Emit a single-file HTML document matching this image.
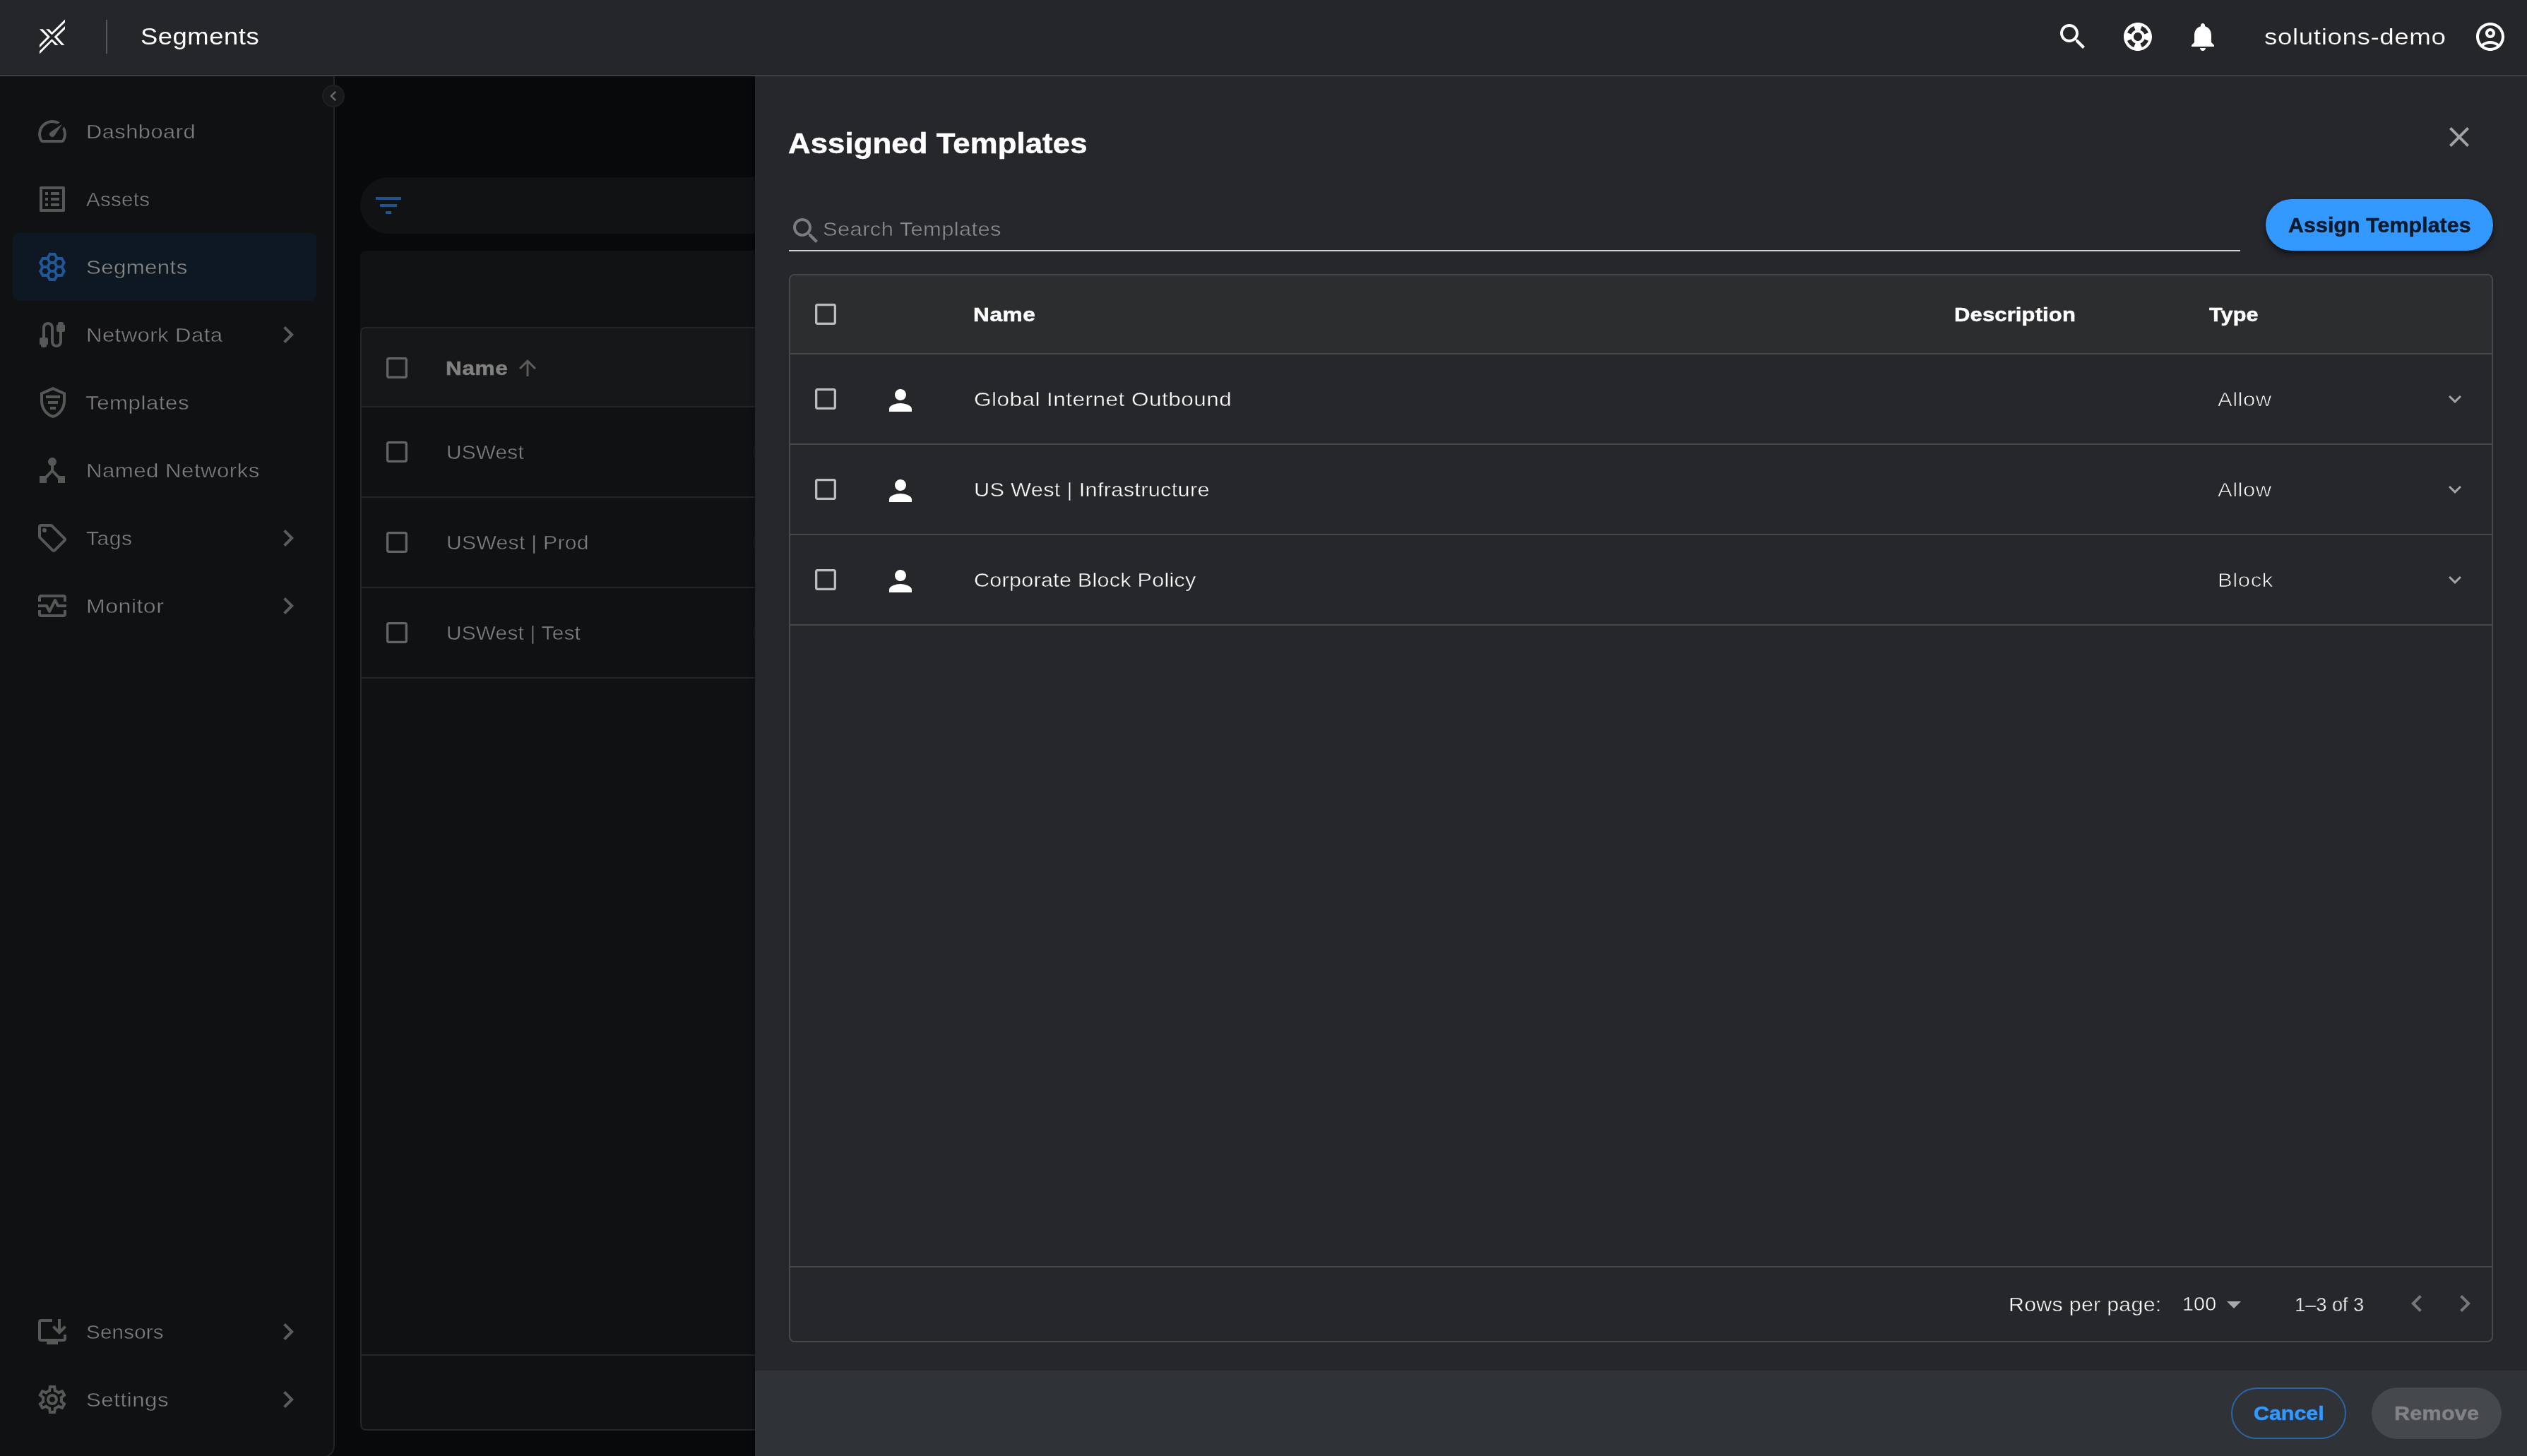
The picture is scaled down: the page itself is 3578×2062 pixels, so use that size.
<!DOCTYPE html>
<html><head><meta charset="utf-8"><title>Segments</title>
<style>
html,body{margin:0;padding:0}
body{width:3578px;height:2062px;background:#08090b;position:relative;overflow:hidden;font-family:"Liberation Sans",sans-serif}
div,span,svg{position:absolute;display:block}
span{white-space:nowrap;transform-origin:0 0;will-change:transform}
</style></head><body>
<div style="left:-2px;top:108px;width:476px;height:1956px;box-sizing:border-box;background:#101113;border:2px solid #232427;border-top:0;border-radius:0 0 16px 0"></div>
<div style="left:18px;top:330px;width:430px;height:96px;background:#0e1822;border-radius:8px;"></div>
<svg viewBox="0 0 24 24" style="left:50px;top:162px;width:48px;height:48px;fill:#565857;"><path d="M20.38 8.57l-1.23 1.85a8 8 0 0 1-.22 7.58H5.07A8 8 0 0 1 15.58 6.85l1.85-1.23A10 10 0 0 0 3.35 19a2 2 0 0 0 1.72 1h13.85a2 2 0 0 0 1.74-1 10 10 0 0 0-.27-10.44zm-9.79 6.84a2 2 0 0 0 2.83 0l5.66-8.49-8.49 5.66a2 2 0 0 0 0 2.83z"/></svg>
<span style="left:122px;top:173px;font-size:28px;line-height:28px;letter-spacing:0.44px;color:#7e7e7e;-webkit-text-stroke:0.45px #101113;transform:scaleX(1.0997)">Dashboard</span>
<svg viewBox="0 0 24 24" style="left:50px;top:258px;width:48px;height:48px;fill:#565857;"><path d="M19 5v14H5V5h14m1.1-2H3.9c-.5 0-.9.4-.9.9v16.2c0 .4.4.9.9.9h16.2c.4 0 .9-.5.9-.9V3.9c0-.5-.5-.9-.9-.9zM11 7h6v2h-6V7zm0 4h6v2h-6v-2zm0 4h6v2h-6zM7 7h2v2H7zm0 4h2v2H7zm0 4h2v2H7z"/></svg>
<span style="left:122px;top:269px;font-size:28px;line-height:28px;letter-spacing:0.25px;color:#7e7e7e;-webkit-text-stroke:0.45px #101113;transform:scaleX(1.054)">Assets</span>
<svg viewBox="0 0 24 24" style="left:50px;top:354px;width:48px;height:48px;fill:#1f5797;"><path d="M21.5 9l-2.25-4h-3.31l-1.69-3h-4.5L8.06 5H4.75L2.5 9l1.69 3-1.69 3 2.25 4h3.31l1.69 3h4.5l1.69-3h3.31l2.25-4-1.69-3 1.69-3zm-2.29 0l-1.12 2h-2.17l-1.12-2 1.12-2h2.17l1.12 2zm-8.3 5l-1.12-2 1.12-2h2.17l1.12 2-1.12 2h-2.17zm2.18-10l1.12 2-1.12 2h-2.17L9.79 6l1.12-2h2.18zM5.92 7h2.17l1.12 2-1.12 2H5.92L4.79 9l1.13-2zM4.79 15l1.12-2h2.17l1.12 2-1.12 2H5.92l-1.13-2zm6.12 5l-1.12-2 1.12-2h2.17l1.12 2-1.12 2h-2.17zm7.17-3h-2.17l-1.12-2 1.12-2h2.17l1.12 2-1.12 2z"/></svg>
<span style="left:122px;top:365px;font-size:28px;line-height:28px;letter-spacing:0.34px;color:#888886;-webkit-text-stroke:0.45px #0e1822;transform:scaleX(1.1155)">Segments</span>
<svg viewBox="0 0 24 24" style="left:50px;top:450px;width:48px;height:48px;fill:#565857;"><path d="M20 5V4c0-.55-.45-1-1-1h-2c-.55 0-1 .45-1 1v1h-1v4c0 .55.45 1 1 1h1v7c0 1.1-.9 2-2 2s-2-.9-2-2V7c0-2.21-1.79-4-4-4S5 4.79 5 7v7H4c-.55 0-1 .45-1 1v4h1v1c0 .55.45 1 1 1h2c.55 0 1-.45 1-1v-1h1v-4c0-.55-.45-1-1-1H7V7c0-1.1.9-2 2-2s2 .9 2 2v10c0 2.21 1.79 4 4 4s4-1.79 4-4v-7h1c.55 0 1-.45 1-1V5h-1z"/></svg>
<span style="left:122px;top:461px;font-size:28px;line-height:28px;letter-spacing:0.37px;color:#7e7e7e;-webkit-text-stroke:0.45px #101113;transform:scaleX(1.1114)">Network Data</span>
<svg viewBox="0 0 24 24" style="left:51px;top:546px;width:48px;height:48px;fill:#565857;"><path d="M12 1L3 5v6c0 5.55 3.84 10.74 9 12 5.16-1.26 9-6.45 9-12V5l-9-4zm7 10c0 4.52-2.98 8.69-7 9.93-4.02-1.24-7-5.41-7-9.93V6.3l7-3.11 7 3.11V11zM7 7h10v2H7zM8.5 11h7v2h-7zM10 15h4v2h-4z"/></svg>
<span style="left:121px;top:557px;font-size:28px;line-height:28px;letter-spacing:0.49px;color:#7e7e7e;-webkit-text-stroke:0.45px #101113;transform:scaleX(1.114)">Templates</span>
<svg viewBox="0 0 24 24" style="left:50px;top:642px;width:48px;height:48px;fill:#565857;"><path d="M17 16l-4-4V8.82C14.16 8.4 15 7.3 15 6c0-1.66-1.34-3-3-3S9 4.34 9 6c0 1.3.84 2.4 2 2.82V12l-4 4H3v5h5v-3.05l4-4.2 4 4.2V21h5v-5h-4z"/></svg>
<span style="left:122px;top:653px;font-size:28px;line-height:28px;letter-spacing:0.4px;color:#7e7e7e;-webkit-text-stroke:0.45px #101113;transform:scaleX(1.1158)">Named Networks</span>
<svg viewBox="0 0 24 24" style="left:50px;top:738px;width:48px;height:48px;fill:#565857;"><path d="M21.41 11.58l-9-9C12.05 2.22 11.55 2 11 2H4c-1.1 0-2 .9-2 2v7c0 .55.22 1.05.59 1.42l9 9c.36.36.86.58 1.41.58s1.05-.22 1.41-.59l7-7c.37-.36.59-.86.59-1.41s-.23-1.06-.59-1.42zM13 20.01L4 11V4h7v-.01l9 9-7 7.02zM6.5 5a1.5 1.5 0 1 0 0 3 1.5 1.5 0 1 0 0-3z"/></svg>
<span style="left:122px;top:749px;font-size:28px;line-height:28px;letter-spacing:0.48px;color:#7e7e7e;-webkit-text-stroke:0.45px #101113;transform:scaleX(1.0732)">Tags</span>
<svg viewBox="0 0 24 24" style="left:50px;top:834px;width:48px;height:48px;fill:#565857;"><path d="M20 4H4c-1.1 0-2 .9-2 2v3h2V6h16v3h2V6c0-1.1-.9-2-2-2zm0 14H4v-3H2v3c0 1.1.9 2 2 2h16c1.1 0 2-.9 2-2v-3h-2v3zM14.89 7.55c-.34-.68-1.45-.68-1.79 0L10 13.76l-1.11-2.21A.988.988 0 0 0 8 11H2v2h5.38l1.72 3.45c.18.34.52.55.9.55s.72-.21.89-.55L14 10.24l1.11 2.21c.17.34.51.55.89.55h6v-2h-5.38l-1.73-3.45z"/></svg>
<span style="left:122px;top:845px;font-size:28px;line-height:28px;letter-spacing:0.41px;color:#7e7e7e;-webkit-text-stroke:0.45px #101113;transform:scaleX(1.1468)">Monitor</span>
<svg viewBox="0 0 24 24" style="left:50px;top:1862px;width:48px;height:48px;fill:#565857;"><path d="M20 17H4V5h8V3H4c-1.11 0-2 .89-2 2v12c0 1.1.89 2 2 2h4v2h8v-2h4c1.1 0 2-.9 2-2v-3h-2v3zM17 14l5-5-1.41-1.41L18 10.17V3h-2v7.17l-2.59-2.58L12 9z"/></svg>
<span style="left:122px;top:1873px;font-size:28px;line-height:28px;letter-spacing:0.23px;color:#7e7e7e;-webkit-text-stroke:0.45px #101113;transform:scaleX(1.0523)">Sensors</span>
<svg viewBox="0 0 24 24" style="left:50px;top:1958px;width:48px;height:48px;fill:#565857;"><path d="M19.43 12.98c.04-.32.07-.64.07-.98 0-.34-.03-.66-.07-.98l2.11-1.65c.19-.15.24-.42.12-.64l-2-3.46c-.09-.16-.26-.25-.44-.25-.06 0-.12.01-.17.03l-2.49 1c-.52-.4-1.08-.73-1.69-.98l-.38-2.65C14.46 2.18 14.25 2 14 2h-4c-.25 0-.46.18-.49.42l-.38 2.65c-.61.25-1.17.59-1.69.98l-2.49-1c-.06-.02-.12-.03-.18-.03-.17 0-.34.09-.43.25l-2 3.46c-.13.22-.07.49.12.64l2.11 1.65c-.04.32-.07.65-.07.98 0 .33.03.66.07.98l-2.11 1.65c-.19.15-.24.42-.12.64l2 3.46c.09.16.26.25.44.25.06 0 .12-.01.17-.03l2.49-1c.52.4 1.08.73 1.69.98l.38 2.65c.03.24.24.42.49.42h4c.25 0 .46-.18.49-.42l.38-2.65c.61-.25 1.17-.59 1.69-.98l2.49 1c.06.02.12.03.18.03.17 0 .34-.09.43-.25l2-3.46c.12-.22.07-.49-.12-.64l-2.11-1.65zm-1.98-1.71c.04.31.05.52.05.73 0 .21-.02.43-.05.73l-.14 1.13.89.7 1.08.84-.7 1.21-1.27-.51-1.04-.42-.9.68c-.43.32-.84.56-1.25.73l-1.06.43-.16 1.13-.2 1.35h-1.4l-.19-1.35-.16-1.13-1.06-.43c-.43-.18-.83-.41-1.23-.71l-.91-.7-1.06.43-1.27.51-.7-1.21 1.08-.84.89-.7-.14-1.13c-.03-.31-.05-.54-.05-.74s.02-.43.05-.73l.14-1.13-.89-.7-1.08-.84.7-1.21 1.27.51 1.04.42.9-.68c.43-.32.84-.56 1.25-.73l1.06-.43.16-1.13.2-1.35h1.39l.19 1.35.16 1.13 1.06.43c.43.18.83.41 1.23.71l.91.7 1.06-.43 1.27-.51.7 1.21-1.07.85-.89.7.14 1.13zM12 8c-2.21 0-4 1.79-4 4s1.79 4 4 4 4-1.79 4-4-1.79-4-4-4zm0 6c-1.1 0-2-.9-2-2s.9-2 2-2 2 .9 2 2-.9 2-2 2z"/></svg>
<span style="left:122px;top:1969px;font-size:28px;line-height:28px;letter-spacing:0.5px;color:#7e7e7e;-webkit-text-stroke:0.45px #101113;transform:scaleX(1.1136)">Settings</span>
<svg viewBox="0 0 24 24" style="left:384px;top:450px;width:48px;height:48px;fill:#5c5c5c;"><path d="M10 6L8.59 7.41 13.17 12l-4.58 4.59L10 18l6-6z"/></svg>
<svg viewBox="0 0 24 24" style="left:384px;top:738px;width:48px;height:48px;fill:#5c5c5c;"><path d="M10 6L8.59 7.41 13.17 12l-4.58 4.59L10 18l6-6z"/></svg>
<svg viewBox="0 0 24 24" style="left:384px;top:834px;width:48px;height:48px;fill:#5c5c5c;"><path d="M10 6L8.59 7.41 13.17 12l-4.58 4.59L10 18l6-6z"/></svg>
<svg viewBox="0 0 24 24" style="left:384px;top:1862px;width:48px;height:48px;fill:#5c5c5c;"><path d="M10 6L8.59 7.41 13.17 12l-4.58 4.59L10 18l6-6z"/></svg>
<svg viewBox="0 0 24 24" style="left:384px;top:1958px;width:48px;height:48px;fill:#5c5c5c;"><path d="M10 6L8.59 7.41 13.17 12l-4.58 4.59L10 18l6-6z"/></svg>
<div style="left:510px;top:251px;width:700px;height:80px;background:#111214;border-radius:40px 0 0 40px;"></div>
<svg viewBox="0 0 24 24" style="left:526px;top:267px;width:48px;height:48px;fill:#1f5390;"><path d="M10 18h4v-2h-4v2zM3 6v2h18V6H3zm3 7h12v-2H6v2z"/></svg>
<div style="left:510px;top:355px;width:700px;height:1671px;background:#111214;border-radius:8px 0 0 8px;"></div>
<div style="left:510px;top:463px;width:700px;height:1563px;box-sizing:border-box;border:2px solid #252628;border-right:0;border-radius:8px 0 0 8px;background:#101113;overflow:hidden"><div style="left:0;top:0;width:700px;height:110px;background:#161719"></div><div style="left:0;top:110px;width:700px;height:2px;background:#252628"></div><div style="left:0;top:238px;width:700px;height:2px;background:#252628"></div><div style="left:0;top:366px;width:700px;height:2px;background:#252628"></div><div style="left:0;top:494px;width:700px;height:2px;background:#252628"></div><div style="left:0;top:1453px;width:700px;height:2px;background:#252628"></div></div>
<svg viewBox="0 0 24 24" style="left:542px;top:501px;width:40px;height:40px;fill:#646464;"><path d="M19 5v14H5V5h14m0-2H5c-1.1 0-2 .9-2 2v14c0 1.1.9 2 2 2h14c1.1 0 2-.9 2-2V5c0-1.1-.9-2-2-2z"/></svg>
<svg viewBox="0 0 24 24" style="left:542px;top:620px;width:40px;height:40px;fill:#646464;"><path d="M19 5v14H5V5h14m0-2H5c-1.1 0-2 .9-2 2v14c0 1.1.9 2 2 2h14c1.1 0 2-.9 2-2V5c0-1.1-.9-2-2-2z"/></svg>
<svg viewBox="0 0 24 24" style="left:542px;top:748px;width:40px;height:40px;fill:#646464;"><path d="M19 5v14H5V5h14m0-2H5c-1.1 0-2 .9-2 2v14c0 1.1.9 2 2 2h14c1.1 0 2-.9 2-2V5c0-1.1-.9-2-2-2z"/></svg>
<svg viewBox="0 0 24 24" style="left:542px;top:876px;width:40px;height:40px;fill:#646464;"><path d="M19 5v14H5V5h14m0-2H5c-1.1 0-2 .9-2 2v14c0 1.1.9 2 2 2h14c1.1 0 2-.9 2-2V5c0-1.1-.9-2-2-2z"/></svg>
<span style="left:631px;top:508px;font-size:28px;line-height:28px;letter-spacing:0.53px;color:#818181;font-weight:700;-webkit-text-stroke:0.5px #818181;transform:scaleX(1.1292)">Name</span>
<svg viewBox="0 0 24 24" style="left:729px;top:503px;width:36px;height:36px;fill:#5c5c5c;"><path d="M4 12l1.41 1.41L11 7.83V20h2V7.83l5.58 5.59L20 12l-8-8-8 8z"/></svg>
<span style="left:632px;top:627px;font-size:28px;line-height:28px;letter-spacing:0.22px;color:#7e7e7e;-webkit-text-stroke:0.45px #0f1012;transform:scaleX(1.0624)">USWest</span>
<span style="left:632px;top:755px;font-size:28px;line-height:28px;letter-spacing:0.31px;color:#7e7e7e;-webkit-text-stroke:0.45px #0f1012;transform:scaleX(1.0729)">USWest | Prod</span>
<span style="left:632px;top:883px;font-size:28px;line-height:28px;letter-spacing:0.24px;color:#7e7e7e;-webkit-text-stroke:0.45px #0f1012;transform:scaleX(1.0621)">USWest | Test</span>
<div style="left:1066px;top:620px;width:40px;height:40px;box-sizing:border-box;border-radius:50%;border:2px solid #1b1c1e;background:#151618"></div>
<div style="left:1066px;top:748px;width:40px;height:40px;box-sizing:border-box;border-radius:50%;border:2px solid #1b1c1e;background:#151618"></div>
<div style="left:1066px;top:876px;width:40px;height:40px;box-sizing:border-box;border-radius:50%;border:2px solid #1b1c1e;background:#151618"></div>
<div style="left:456px;top:120px;width:32px;height:32px;box-sizing:border-box;border-radius:50%;background:#18191b;border:2px solid #1f2022"></div>
<svg viewBox="0 0 24 24" style="left:458.2px;top:122.2px;width:28px;height:28px;fill:#6a6a6a;"><path d="M15.41 7.41L14 6l-6 6 6 6 1.41-1.41L10.83 12z"/></svg>
<div style="left:1069px;top:108px;width:2509px;height:1954px;background:#26272b;box-shadow:-2px 0 8px rgba(0,0,0,.35)"></div>
<div style="left:1069px;top:1941px;width:2509px;height:121px;background:#2f3237;"></div>
<span style="left:1116px;top:183px;font-size:41px;line-height:41px;letter-spacing:0.08px;color:#ffffff;font-weight:700;-webkit-text-stroke:0.5px #ffffff;transform:scaleX(1.0665)">Assigned Templates</span>
<svg viewBox="0 0 24 24" style="left:3458.3px;top:170.1px;width:48px;height:48px;fill:#a3a3a4;"><path d="M19 6.41L17.59 5 12 10.59 6.41 5 5 6.41 10.59 12 5 17.59 6.41 19 12 13.41 17.59 19 19 17.59 13.41 12z"/></svg>
<svg viewBox="0 0 24 24" style="left:1117px;top:303.3px;width:48px;height:48px;fill:#7b7c7f;"><path d="M15.5 14h-.79l-.28-.27C15.41 12.59 16 11.11 16 9.5 16 5.91 13.09 3 9.5 3S3 5.91 3 9.5 5.91 16 9.5 16c1.61 0 3.09-.59 4.23-1.57l.27.28v.79l5 4.99L20.49 19l-4.99-5zm-6 0C7.01 14 5 11.99 5 9.5S7.01 5 9.5 5 14 7.01 14 9.5 11.99 14 9.5 14z"/></svg>
<span style="left:1165px;top:311px;font-size:28px;line-height:28px;letter-spacing:0.36px;color:#8b8c8e;-webkit-text-stroke:0.45px #26272b;transform:scaleX(1.1027)">Search Templates</span>
<div style="left:1117px;top:354px;width:2055px;height:2px;background:#d2d2d3;"></div>
<div style="left:3208px;top:282px;width:322px;height:73px;border-radius:37px;background:#3399ff;box-shadow:0 6px 8px rgba(0,0,0,.35),0 2px 4px rgba(0,0,0,.3)"></div>
<span style="left:3240px;top:305px;font-size:29px;line-height:29px;letter-spacing:0.11px;color:#0b1a2b;font-weight:700;-webkit-text-stroke:0.5px #0b1a2b;transform:scaleX(1.044)">Assign Templates</span>
<div style="left:1117px;top:388px;width:2413px;height:1513px;box-sizing:border-box;border:2px solid #484849;border-radius:8px;overflow:hidden"><div style="left:0;top:0;width:2409px;height:110px;background:#2c2d2f"></div><div style="left:0;top:110px;width:2409px;height:2px;background:#484849"></div><div style="left:0;top:238px;width:2409px;height:2px;background:#484849"></div><div style="left:0;top:366px;width:2409px;height:2px;background:#484849"></div><div style="left:0;top:494px;width:2409px;height:2px;background:#484849"></div><div style="left:0;top:1403px;width:2409px;height:2px;background:#484849"></div></div>
<svg viewBox="0 0 24 24" style="left:1149px;top:425px;width:40px;height:40px;fill:#bcbcbd;"><path d="M19 5v14H5V5h14m0-2H5c-1.1 0-2 .9-2 2v14c0 1.1.9 2 2 2h14c1.1 0 2-.9 2-2V5c0-1.1-.9-2-2-2z"/></svg>
<svg viewBox="0 0 24 24" style="left:1149px;top:545px;width:40px;height:40px;fill:#bcbcbd;"><path d="M19 5v14H5V5h14m0-2H5c-1.1 0-2 .9-2 2v14c0 1.1.9 2 2 2h14c1.1 0 2-.9 2-2V5c0-1.1-.9-2-2-2z"/></svg>
<svg viewBox="0 0 24 24" style="left:1149px;top:673px;width:40px;height:40px;fill:#bcbcbd;"><path d="M19 5v14H5V5h14m0-2H5c-1.1 0-2 .9-2 2v14c0 1.1.9 2 2 2h14c1.1 0 2-.9 2-2V5c0-1.1-.9-2-2-2z"/></svg>
<svg viewBox="0 0 24 24" style="left:1149px;top:801px;width:40px;height:40px;fill:#bcbcbd;"><path d="M19 5v14H5V5h14m0-2H5c-1.1 0-2 .9-2 2v14c0 1.1.9 2 2 2h14c1.1 0 2-.9 2-2V5c0-1.1-.9-2-2-2z"/></svg>
<svg viewBox="0 0 24 24" style="left:1251px;top:543px;width:48px;height:48px;fill:#ffffff;"><path d="M12 12c2.21 0 4-1.79 4-4s-1.79-4-4-4-4 1.79-4 4 1.79 4 4 4zm0 2c-2.67 0-8 1.34-8 4v2h16v-2c0-2.66-5.33-4-8-4z"/></svg>
<svg viewBox="0 0 24 24" style="left:1251px;top:671px;width:48px;height:48px;fill:#ffffff;"><path d="M12 12c2.21 0 4-1.79 4-4s-1.79-4-4-4-4 1.79-4 4 1.79 4 4 4zm0 2c-2.67 0-8 1.34-8 4v2h16v-2c0-2.66-5.33-4-8-4z"/></svg>
<svg viewBox="0 0 24 24" style="left:1251px;top:799px;width:48px;height:48px;fill:#ffffff;"><path d="M12 12c2.21 0 4-1.79 4-4s-1.79-4-4-4-4 1.79-4 4 1.79 4 4 4zm0 2c-2.67 0-8 1.34-8 4v2h16v-2c0-2.66-5.33-4-8-4z"/></svg>
<svg viewBox="0 0 24 24" style="left:3458px;top:547px;width:36px;height:36px;fill:#a4a4a5;"><path d="M16.59 8.59L12 13.17 7.41 8.59 6 10l6 6 6-6z"/></svg>
<svg viewBox="0 0 24 24" style="left:3458px;top:675px;width:36px;height:36px;fill:#a4a4a5;"><path d="M16.59 8.59L12 13.17 7.41 8.59 6 10l6 6 6-6z"/></svg>
<svg viewBox="0 0 24 24" style="left:3458px;top:803px;width:36px;height:36px;fill:#a4a4a5;"><path d="M16.59 8.59L12 13.17 7.41 8.59 6 10l6 6 6-6z"/></svg>
<span style="left:1378px;top:432px;font-size:28px;line-height:28px;letter-spacing:0.47px;color:#ffffff;font-weight:700;-webkit-text-stroke:0.5px #ffffff;transform:scaleX(1.1317)">Name</span>
<span style="left:2767px;top:432px;font-size:28px;line-height:28px;letter-spacing:0.14px;color:#ffffff;font-weight:700;-webkit-text-stroke:0.5px #ffffff;transform:scaleX(1.1056)">Description</span>
<span style="left:3128px;top:432px;font-size:28px;line-height:28px;letter-spacing:0.06px;color:#ffffff;font-weight:700;-webkit-text-stroke:0.5px #ffffff;transform:scaleX(1.095)">Type</span>
<span style="left:1379px;top:552px;font-size:28px;line-height:28px;letter-spacing:0.39px;color:#ffffff;-webkit-text-stroke:0.45px #26272b;transform:scaleX(1.1277)">Global Internet Outbound</span>
<span style="left:1379px;top:680px;font-size:28px;line-height:28px;letter-spacing:0.28px;color:#ffffff;-webkit-text-stroke:0.45px #26272b;transform:scaleX(1.0965)">US West | Infrastructure</span>
<span style="left:1379px;top:808px;font-size:28px;line-height:28px;letter-spacing:0.26px;color:#ffffff;-webkit-text-stroke:0.45px #26272b;transform:scaleX(1.0888)">Corporate Block Policy</span>
<span style="left:3140px;top:552px;font-size:28px;line-height:28px;letter-spacing:0.45px;color:#ffffff;-webkit-text-stroke:0.75px #26272b;transform:scaleX(1.1075)">Allow</span>
<span style="left:3140px;top:680px;font-size:28px;line-height:28px;letter-spacing:0.45px;color:#ffffff;-webkit-text-stroke:0.75px #26272b;transform:scaleX(1.1075)">Allow</span>
<span style="left:3140px;top:808px;font-size:28px;line-height:28px;letter-spacing:0.53px;color:#ffffff;-webkit-text-stroke:0.75px #26272b;transform:scaleX(1.1087)">Block</span>
<span style="left:2844px;top:1834px;font-size:28px;line-height:28px;letter-spacing:0.26px;color:#ffffff;-webkit-text-stroke:0.45px #26272b;transform:scaleX(1.0842)">Rows per page:</span>
<span style="left:3090px;top:1833px;font-size:28px;line-height:28px;letter-spacing:0.2px;color:#ffffff;-webkit-text-stroke:0.45px #26272b;transform:scaleX(1.02)">100</span>
<span style="left:3249px;top:1834px;font-size:28px;line-height:28px;letter-spacing:-0.09px;color:#ffffff;-webkit-text-stroke:0.45px #26272b;transform:scaleX(0.9755)">1–3 of 3</span>
<svg viewBox="0 0 24 24" style="left:3139.3px;top:1822.7px;width:48px;height:48px;fill:#a9a9aa;"><path d="M7 10l5 5 5-5z"/></svg>
<svg viewBox="0 0 24 24" style="left:3398.1px;top:1822.3px;width:48px;height:48px;fill:#77787a;"><path d="M15.41 7.41L14 6l-6 6 6 6 1.41-1.41L10.83 12z"/></svg>
<svg viewBox="0 0 24 24" style="left:3466.2px;top:1822.3px;width:48px;height:48px;fill:#77787a;"><path d="M10 6L8.59 7.41 13.17 12l-4.58 4.59L10 18l6-6z"/></svg>
<div style="left:3159px;top:1965px;width:163px;height:73px;box-sizing:border-box;border-radius:37px;border:2px solid #2c65a6"></div>
<span style="left:3191px;top:1988px;font-size:28px;line-height:28px;letter-spacing:-0.03px;color:#3399ff;font-weight:700;-webkit-text-stroke:0.5px #3399ff;transform:scaleX(1.0875)">Cancel</span>
<div style="left:3358px;top:1965px;width:184px;height:73px;border-radius:37px;background:#46494c"></div>
<span style="left:3390px;top:1988px;font-size:28px;line-height:28px;letter-spacing:0.18px;color:#818386;font-weight:700;-webkit-text-stroke:0.5px #818386;transform:scaleX(1.0932)">Remove</span>
<div style="left:0px;top:0px;width:3578px;height:106px;background:#25262a;"></div>
<div style="left:0px;top:106px;width:3578px;height:2px;background:#3d3e42;"></div>
<svg viewBox="0 0 1359 1456" style="left:40px;top:15px;width:70px;height:75px;fill:#fff"><polygon points="485,508 575,508 650,598 1010,245 1010,325 650,668"/><polygon points="310,508 400,508 600,725 310,1020 310,935 520,725"/><polygon points="1010,425 1010,510 790,722 1000,950 915,950 712,725"/><polygon points="310,1195 310,1110 650,780 830,950 740,950 650,850"/></svg>
<div style="left:150px;top:28px;width:2px;height:48px;background:#56575a;"></div>
<span style="left:199px;top:35px;font-size:33px;line-height:33px;letter-spacing:0.47px;color:#ffffff;transform:scaleX(1.1036)">Segments</span>
<svg viewBox="0 0 24 24" style="left:2911px;top:28px;width:48px;height:48px;fill:#fff;"><path d="M15.5 14h-.79l-.28-.27C15.41 12.59 16 11.11 16 9.5 16 5.91 13.09 3 9.5 3S3 5.91 3 9.5 5.91 16 9.5 16c1.61 0 3.09-.59 4.23-1.57l.27.28v.79l5 4.99L20.49 19l-4.99-5zm-6 0C7.01 14 5 11.99 5 9.5S7.01 5 9.5 5 14 7.01 14 9.5 11.99 14 9.5 14z"/></svg>
<svg viewBox="0 0 24 24" style="left:3003px;top:27.7px;width:48px;height:48px;fill:#fff;"><path d="M12 2C6.48 2 2 6.48 2 12s4.48 10 10 10 10-4.48 10-10S17.52 2 12 2zm7.46 7.12l-2.78 1.15c-.51-1.36-1.58-2.44-2.95-2.94l1.15-2.78c2.1.8 3.77 2.47 4.58 4.57zM12 15c-1.66 0-3-1.34-3-3s1.34-3 3-3 3 1.34 3 3-1.34 3-3 3zM9.13 4.54l1.17 2.78c-1.38.5-2.47 1.59-2.98 2.97L4.54 9.13c.81-2.11 2.48-3.78 4.59-4.59zM4.54 14.87l2.78-1.15c.51 1.38 1.59 2.46 2.97 2.96l-1.17 2.78c-2.1-.81-3.77-2.48-4.58-4.59zm10.34 4.59l-1.15-2.78c1.37-.51 2.45-1.59 2.95-2.97l2.78 1.17c-.81 2.1-2.48 3.77-4.58 4.58z"/></svg>
<svg viewBox="0 0 24 24" style="left:3095px;top:28px;width:48px;height:48px;fill:#fff;"><path d="M12 22c1.1 0 2-.9 2-2h-4c0 1.1.89 2 2 2zm6-6v-5c0-3.07-1.64-5.64-4.5-6.32V4c0-.83-.67-1.5-1.5-1.5s-1.5.67-1.5 1.5v.68C7.63 5.36 6 7.92 6 11v5l-2 2v1h16v-1l-2-2z"/></svg>
<span style="left:3206px;top:36px;font-size:32px;line-height:32px;letter-spacing:0.55px;color:#ffffff;-webkit-text-stroke:0.2px #25262a;transform:scaleX(1.1462)">solutions-demo</span>
<svg viewBox="0 0 24 24" style="left:3502px;top:27.7px;width:48px;height:48px;fill:#fff;"><path d="M12 2C6.48 2 2 6.48 2 12s4.48 10 10 10 10-4.48 10-10S17.52 2 12 2zM7.35 18.5C8.66 17.56 10.26 17 12 17s3.34.56 4.65 1.5C15.34 19.44 13.74 20 12 20s-3.34-.56-4.65-1.5zm10.79-1.38C16.45 15.8 14.32 15 12 15s-4.45.8-6.14 2.12C4.7 15.73 4 13.95 4 12c0-4.42 3.58-8 8-8s8 3.58 8 8c0 1.95-.7 3.73-1.86 5.12zM12 6c-1.93 0-3.5 1.57-3.5 3.5S10.07 13 12 13s3.5-1.57 3.5-3.5S13.93 6 12 6zm0 5c-.83 0-1.5-.67-1.5-1.5S11.17 8 12 8s1.5.67 1.5 1.5S12.83 11 12 11z"/></svg>
</body></html>
